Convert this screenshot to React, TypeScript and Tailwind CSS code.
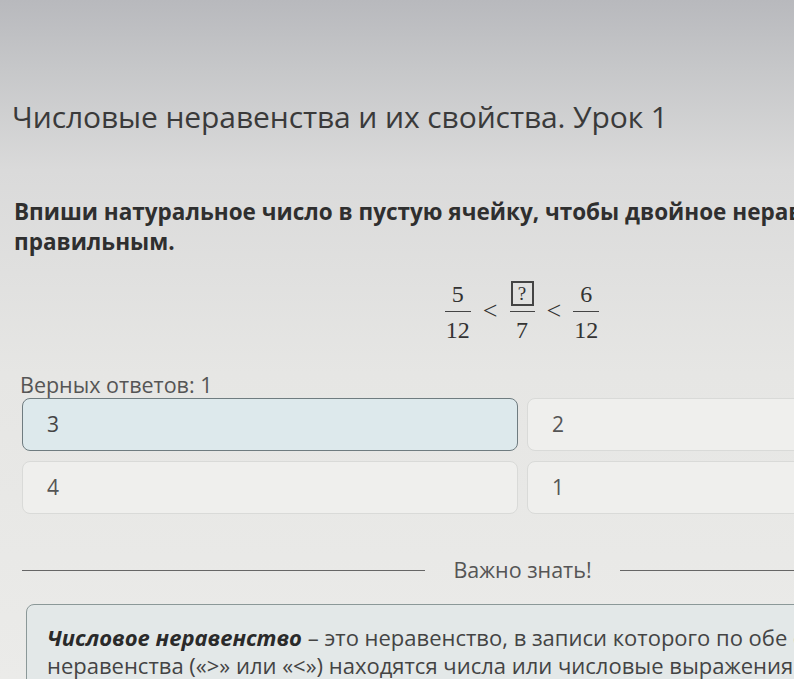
import React from "react";

function Frac({ top, bottom }: { top: React.ReactNode; bottom: React.ReactNode }) {
  return (
    <span className="inline-flex flex-col items-center mx-[8px]">
      <span className="px-[1px] h-[28px] flex items-end leading-[24px]">{top}</span>
      <span className="w-full border-t-[1.5px] border-[#444] mt-[5px]" />
      <span className="px-[1px] leading-[26px] mt-[5px]">{bottom}</span>
    </span>
  );
}

function Answer({ value, selected }: { value: string; selected?: boolean }) {
  return (
    <div
      className={
        selected
          ? "h-[53px] rounded-[8px] border-[1.5px] border-[#6f7c80] bg-[#dde9ec] flex items-center pl-[24px] text-[21px] text-[#444]"
          : "h-[53px] rounded-[8px] border border-[#d9dad8] bg-[#efefed] flex items-center pl-[24px] text-[21px] text-[#555]"
      }
    >
      {value}
    </div>
  );
}

export default function App() {
  return (
    <div className="w-[794px] h-[679px] overflow-hidden bg-[linear-gradient(180deg,#b8b9bd_0%,#c6c7c9_10%,#dadada_25%,#e6e6e4_55%,#ebebe9_100%)] font-['Open_Sans',sans-serif] text-[#333]">
      <div className="w-[1044px]">
        {/* Lesson title */}
        <h1 className="pt-[97px] pl-[12px] text-[30px] leading-[40px] font-normal text-[#3a3a3a] tracking-[-0.1px]">
          Числовые неравенства и их свойства. Урок 1
        </h1>

        {/* Task */}
        <p className="mt-[60px] pl-[14px] text-[22.5px] leading-[30px] font-bold text-[#2f2f2f]">
          Впиши натуральное число в пустую ячейку, чтобы двойное неравенство
          <br />
          правильным.
        </p>

        <div className="mt-[21px] flex justify-center items-center font-['Liberation_Serif',serif] text-[24px] text-[#333]">
          <Frac top="5" bottom="12" />
          <span className="mx-[4px] text-[26px]">&lt;</span>
          <Frac
            top={
              <span className="inline-flex items-center justify-center w-[23px] h-[25px] border-2 border-[#444] text-[19px] leading-none">
                ?
              </span>
            }
            bottom="7"
          />
          <span className="mx-[4px] text-[26px]">&lt;</span>
          <Frac top="6" bottom="12" />
        </div>

        {/* Answers */}
        <div className="mt-[29px] pl-[20px] text-[21.5px] leading-[26px] text-[#555]">Верных ответов: 1</div>
        <div className="ml-[22px] w-[1001px] grid grid-cols-2 gap-x-[9px] gap-y-[10px]">
          <Answer value="3" selected />
          <Answer value="2" />
          <Answer value="4" />
          <Answer value="1" />
        </div>

        {/* Important */}
        <div className="mt-[42px] ml-[22px] w-[1001px] flex items-center">
          <div className="flex-1 border-t border-[#666]" />
          <span className="px-[28px] text-[21.5px] leading-[28px] text-[#555]">Важно знать!</span>
          <div className="flex-1 border-t border-[#666]" />
        </div>

        <div className="mt-[20px] ml-[26px] w-[1000px] rounded-[8px] border-[1.5px] border-[#8b9898] bg-[#e3e8e8] px-[20px] pt-[18px] pb-[16px] text-[22px] leading-[28px] text-[#444]">
          <b className="italic text-[#2a2a2a]">Числовое неравенство</b> – это неравенство, в записи которого по обе
          стороны
          <br />
          неравенства («&gt;» или «&lt;») находятся числа или числовые выражения.
        </div>
      </div>
    </div>
  );
}
